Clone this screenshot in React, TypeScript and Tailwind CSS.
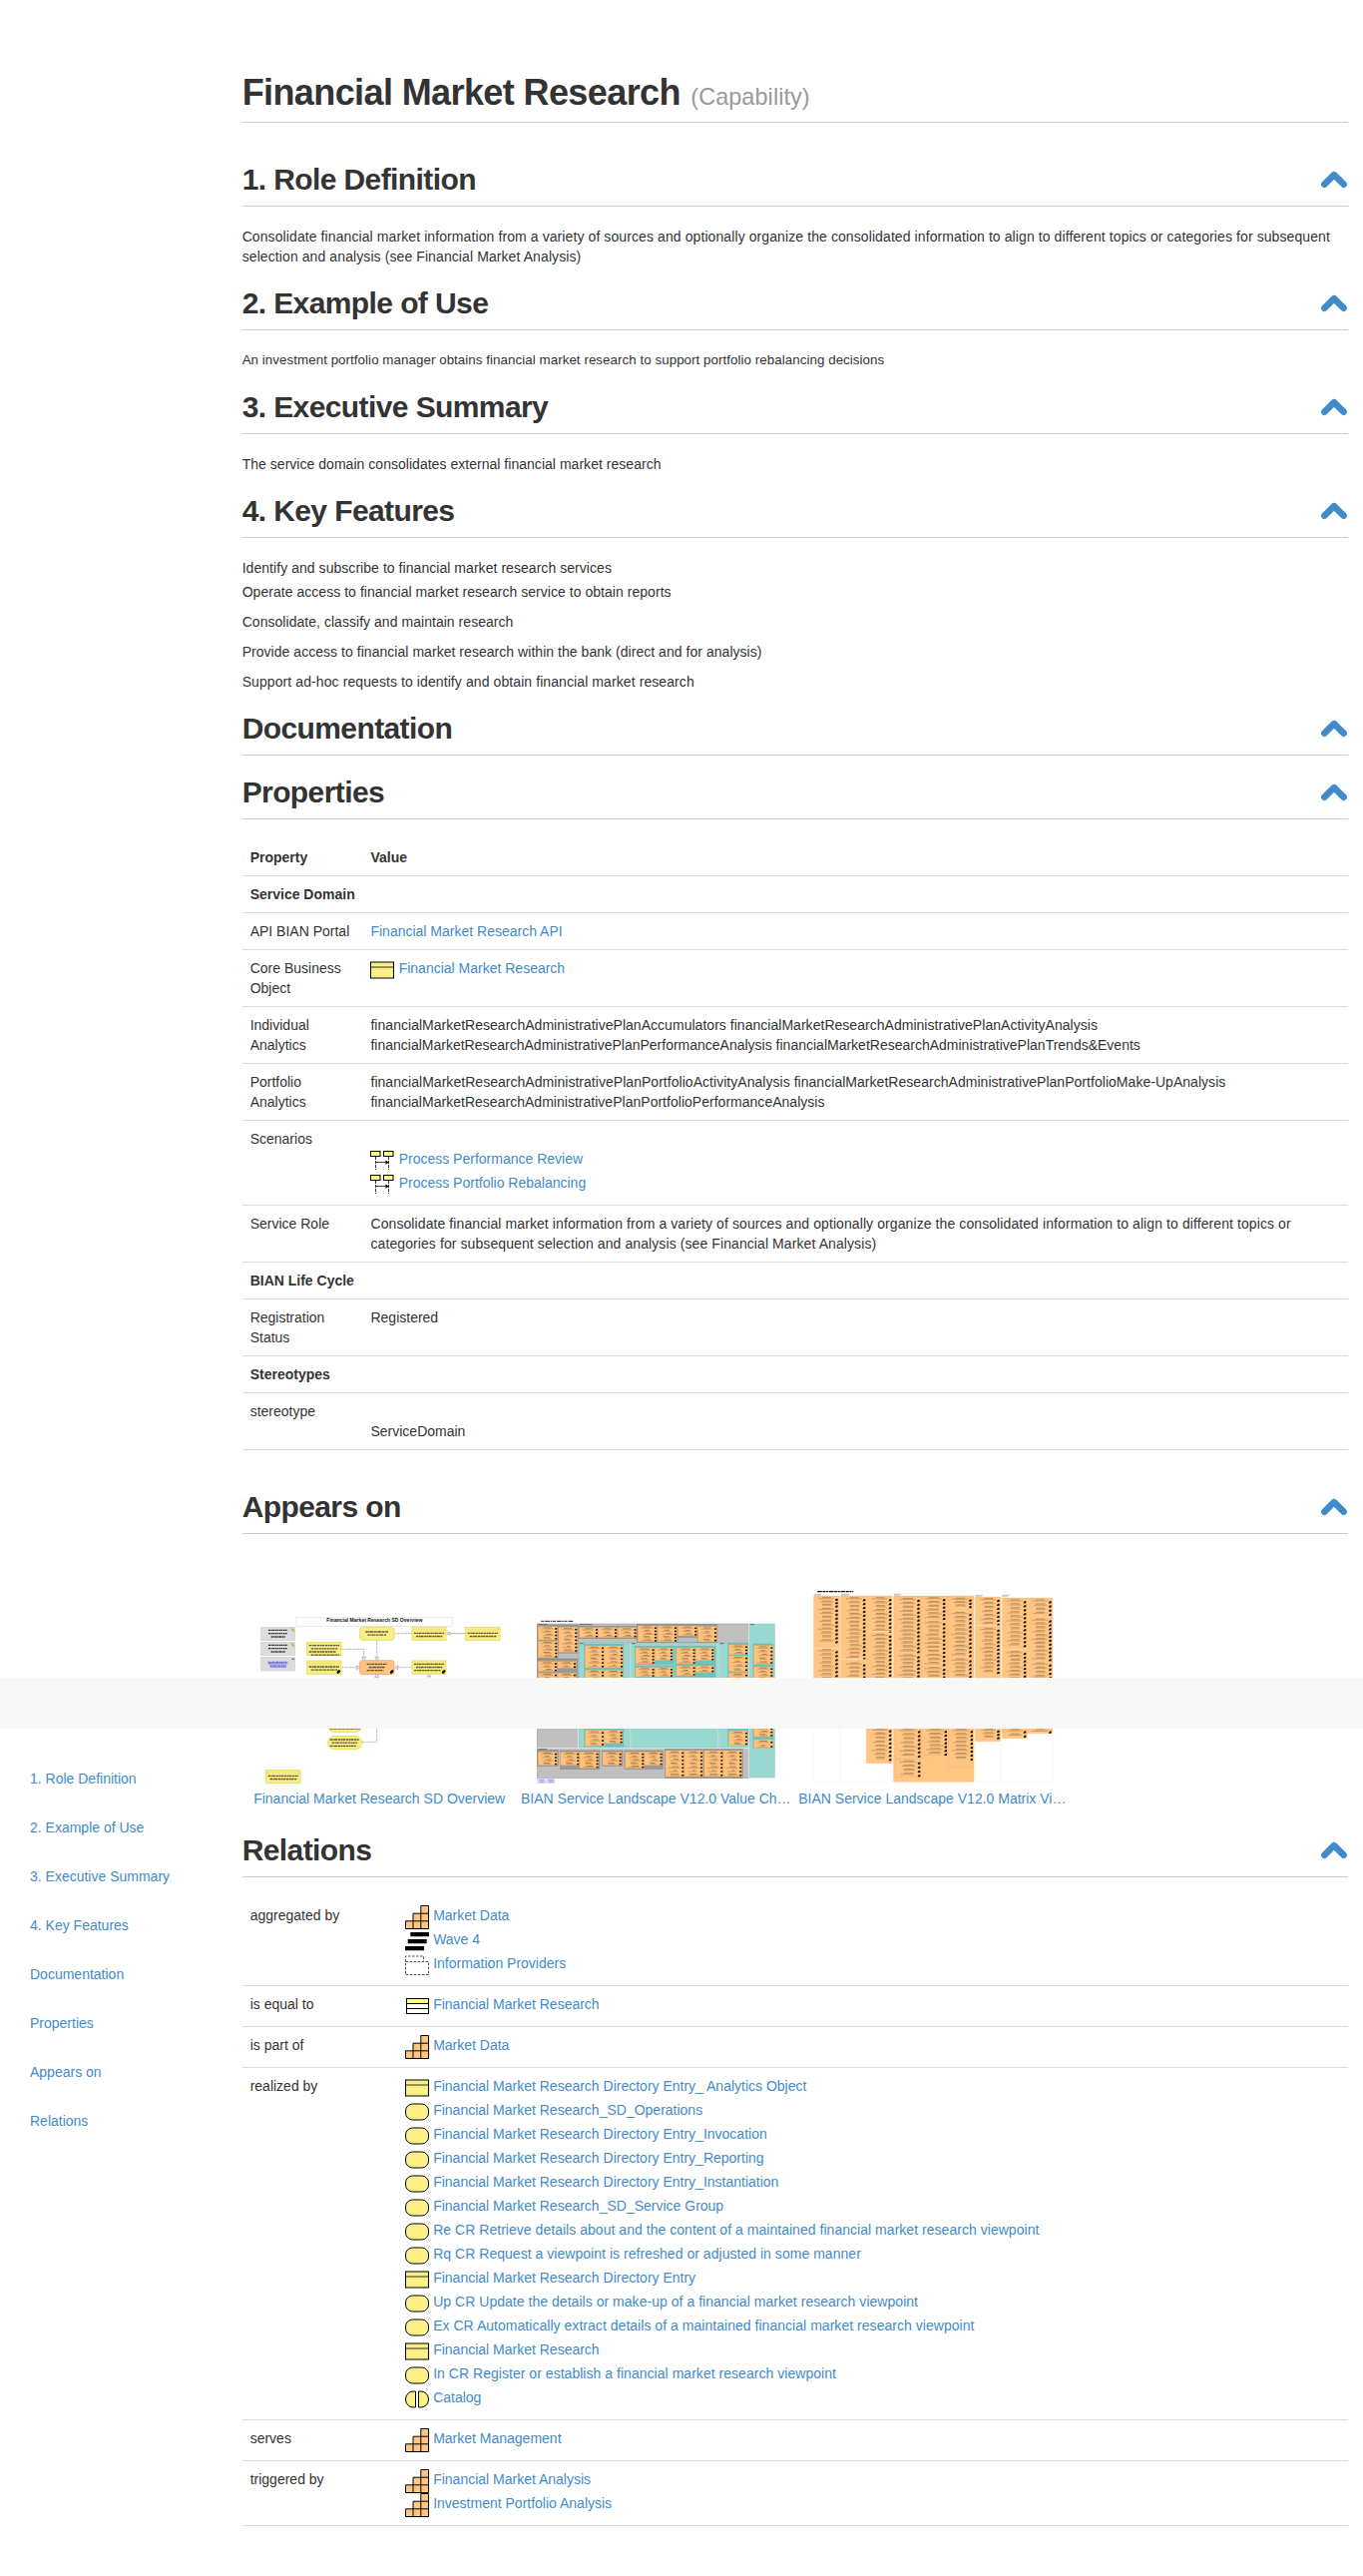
import React from "react";

type IconKind = "object" | "service" | "capability" | "plateau" | "group" | "entity" | "process" | "catalog";
type LinkItem = [IconKind, string];

const YELLOW = "#fbef87";
const ORANGE = "#ffc582";

function Icon({ kind }: { kind: IconKind }) {
  return (
    <svg width="24" height="24" viewBox="0 0 24 24" fill="none" stroke="#000" className="block shrink-0">
      {kind === "object" && (
        <>
          <rect x="0.5" y="4" width="23" height="16" fill={YELLOW} />
          <path d="M1 9H23" stroke="#7d7744" strokeWidth="1.6" />
        </>
      )}
      {kind === "service" && <rect x="0.5" y="4" width="23" height="16" rx="7" fill={YELLOW} />}
      {kind === "capability" && (
        <>
          <path d="M0.5 23.5V15.8H8V8.2H15.8V0.5H23.5V23.5Z" fill={ORANGE} />
          <path d="M8 15.8V23.5M15.8 8.2V23.5M8 15.8H23.5M15.8 8.2H23.5" />
        </>
      )}
      {kind === "plateau" && (
        <path d="M5.3 3H24V7.2H5.3ZM2.7 10H21.7V14.2H2.7ZM0 17H19V21.2H0Z" fill="#000" stroke="none" />
      )}
      {kind === "group" && (
        <path d="M0.5 8.5V3H18.5V8.5M0.5 8.5H23.5V21.5H0.5Z" stroke="#555" strokeDasharray="2.6 1.4" />
      )}
      {kind === "entity" && (
        <>
          <rect x="1.5" y="4.5" width="22" height="15" fill="#fff" />
          <rect x="1.5" y="4.5" width="22" height="5" fill="#ffff80" />
          <path d="M1.5 14.5H23.5" />
        </>
      )}
      {kind === "process" && (
        <>
          <rect x="0.5" y="2.5" width="9.5" height="5" fill="#ffff80" />
          <rect x="13.5" y="2.5" width="9.5" height="5" fill="#ffff80" />
          <path d="M5.5 8V21M18.5 8V21" strokeDasharray="3 1" stroke="#333" />
          <path d="M5.5 13.5H17" stroke="#444" />
          <path d="M15.5 11.5L19 13.6L15.5 15.7Z" fill="#000" stroke="none" />
        </>
      )}
      {kind === "catalog" && (
        <>
          <path d="M10.5 4V20H8A7.5 8 0 0 1 8 4Z" fill={YELLOW} />
          <path d="M13.5 4V20H16A7.5 8 0 0 0 16 4Z" fill={YELLOW} />
        </>
      )}
    </svg>
  );
}

function Links({ items }: { items: LinkItem[] }) {
  return (
    <ul>
      {items.map(([kind, label]) => (
        <li key={label} className="flex h-6 items-start gap-[4.2px]">
          <Icon kind={kind} />
          <a className={label.includes(" CR ") || label.startsWith("Up CR") ? "tracking-[0.035px] text-[#428bca]" : "text-[#428bca]"}>{label}</a>
        </li>
      ))}
    </ul>
  );
}

function Heading({ children }: { children: React.ReactNode }) {
  return (
    <div className="my-5 flex h-11 items-start justify-between border-b border-[#ccc]">
      <h2 className="text-[30px] leading-[33px] font-bold tracking-[-0.6px]">{children}</h2>
      <svg width="28" height="20" viewBox="0 0 28 20" className="mt-[7px] block">
        <path d="M4.4 14.7L14 5.2L23.6 14.7" fill="none" stroke="#428bca" strokeWidth="6.6" strokeLinecap="round" strokeLinejoin="round" />
      </svg>
    </div>
  );
}

function PropertyRow({ name, children }: { name: string; children: React.ReactNode }) {
  return (
    <div className="flex border-b border-[#ddd] py-2">
      <div className="w-[120.8px] shrink-0 pr-2 pl-2">{name}</div>
      <div className="grow pr-2 pl-2">{children}</div>
    </div>
  );
}

function GroupRow({ name }: { name: string }) {
  return <div className="border-b border-[#ddd] p-2 font-bold">{name}</div>;
}

function RelationRow({ name, items }: { name: string; items: LinkItem[] }) {
  return (
    <div className="flex border-b border-[#ddd] py-2">
      <div className="w-[155.3px] shrink-0 pl-2">{name}</div>
      <div className="grow pl-2">
        <Links items={items} />
      </div>
    </div>
  );
}

type Box = [number, number, number, number];

function Caption({ x, y, w, rows }: { x: number; y: number; w: number; rows: number }) {
  return (
    <>
      {Array.from({ length: rows }, (_, i) => (
        <path
          key={i}
          d={`M${x + 6 + (i % 2) * 6} ${y + i * 9.5}H${x + w - 6 - (i % 3) * 5}`}
          stroke="#222"
          strokeOpacity="0.75"
          strokeWidth="4"
          strokeDasharray="7 1.5 4 1 9 2"
        />
      ))}
    </>
  );
}

function OverviewDiagram() {
  const cards: [...Box, number][] = [
    [518, 151, 102, 39, 2],
    [679, 151, 103, 39, 2],
    [202, 196, 103, 40, 4],
    [202, 252, 103, 40, 2],
    [518, 252, 102, 40, 3],
    [79, 580, 103, 40, 2],
  ];
  return (
    <svg viewBox="8 -69 831.25 705" className="block h-[235px] w-full">
      <rect x="170" y="121" width="470" height="27" fill="#fff" stroke="#e3e3e3" strokeWidth="2" />
      <text x="405" y="135" textAnchor="middle" textLength="288" lengthAdjust="spacingAndGlyphs" fontSize="13.5" fontWeight="bold" fill="#111">
        Financial Market Research SD Overview
      </text>
      {[151, 196, 242].map((y, i) => (
        <g key={y}>
          <rect x="64" y={y} width="102" height="40" fill="#dcdcdc" stroke="#cfcfcf" strokeWidth="2" />
          {i < 2 ? (
            <>
              <path d={`M86 ${y + 9}H144M86 ${y + 19}H142M94 ${y + 29}H136`} stroke="#333" strokeWidth="4" strokeDasharray="6 1.5 4 1" />
              <path d={`M154 ${y + 5}h5v6h5`} stroke="#b5a800" strokeWidth="3" fill="none" />
            </>
          ) : (
            <>
              <path d={`M85 ${y + 15}H144M91 ${y + 25}H140`} stroke="#6c62ef" strokeWidth="5" strokeDasharray="6 1.5 4 1" />
              <path d={`M85 ${y + 19}H144M91 ${y + 29}H140`} stroke="#3b2ff5" strokeWidth="1.5" />
              <path d={`M156 ${y + 5}h8`} stroke="#777" strokeWidth="4" />
            </>
          )}
        </g>
      ))}
      <g fill="none" stroke="#888" strokeWidth="1.8">
        <path d="M465 170H518" strokeDasharray="6 2" />
        <path d="M632 170H679" />
        <path d="M412 190V240M305 217H373V240M305 272H352M476 272H518M412 302V496H368" strokeDasharray="6 2" />
        <g fill="#fff">
          <path d="M622 170L632 165V175ZM412 250L406 241H418ZM373 250L367 241H379ZM361 272L352 266V278ZM466 272L475 266V278ZM412 292L406 301H418ZM569 292L564 300H574Z" />
        </g>
      </g>
      {cards.map(([x, y, w, h, rows]) => (
        <g key={`${x}-${y}`}>
          <rect x={x} y={y} width={w} height={h} fill="#f9ee83" stroke="#e6da55" strokeWidth="2.5" />
          <path d={`M${x + 2} ${y + 8}H${x + w - 2}`} stroke="#ddd268" strokeWidth="1.5" />
          <Caption x={x} y={y + (rows > 2 ? 10 : 18)} w={w} rows={rows} />
        </g>
      ))}
      <rect x="361" y="151" width="103" height="39" rx="7" fill="#f9ee83" stroke="#e6da55" strokeWidth="2.5" />
      <Caption x={372} y={165} w={80} rows={2} />
      <rect x="361" y="251" width="103" height="42" rx="7" fill="#ffc384" stroke="#eda866" strokeWidth="2.5" />
      <Caption x={376} y={262} w={72} rows={3} />
      <g stroke="#000" strokeWidth="7" strokeLinecap="round">
        <path d="M295 287L299 283M455 287L459 283M611 287L615 283" />
      </g>
      <rect x="265" y="428" width="102" height="38" rx="19" fill="#f9ee83" stroke="#e6da55" strokeWidth="2.5" />
      <Caption x={265} y={456} w={102} rows={1} />
      <rect x="265" y="478" width="102" height="40" rx="20" fill="#f9ee83" stroke="#e6da55" strokeWidth="2.5" />
      <Caption x={265} y={489} w={100} rows={3} />
    </svg>
  );
}

function Stack({ x, y, w, h, pitch = 10.6 }: { x: number; y: number; w: number; h: number; pitch?: number }) {
  const rows = Math.max(2, Math.round(h / pitch));
  const step = h / rows;
  return (
    <>
      <rect x={x} y={y} width={w} height={h} fill="#ffc17c" stroke="#e6a45c" strokeWidth="1" />
      {Array.from({ length: rows }, (_, i) => (
        <g key={i}>
          <path d={`M${x + 16 + (i % 3) * 4} ${y + step * (i + 0.35)}H${x + w - 17 - (i % 2) * 5}`} stroke="#7b5a36" strokeWidth="1.8" />
          <path d={`M${x + 9 + ((i * 5) % 4) * 3} ${y + step * (i + 0.68)}H${x + w - 12 - (i % 2) * 5}`} stroke="#997247" strokeWidth="1.4" />
          <rect x={x + w - 7} y={y + step * (i + 0.45)} width="6" height="4.5" fill="#111" />
        </g>
      ))}
    </>
  );
}

function ValueChainDiagram() {
  const greyFrames: Box[] = [
    [55, 144, 122, 104], [55, 248, 122, 60], [180, 148, 176, 37], [354, 142, 242, 55],
    [55, 520, 62, 48], [123, 522, 119, 56], [249, 522, 62, 46], [317, 522, 115, 55], [438, 518, 234, 86],
  ];
  const tealFrames: Box[] = [
    [196, 202, 118, 106], [348, 208, 117, 54], [470, 208, 120, 58], [348, 267, 117, 36], [470, 264, 120, 36],
    [628, 199, 61, 110], [704, 201, 60, 108], [196, 458, 118, 52], [628, 458, 61, 48], [704, 440, 60, 75],
  ];
  const stacks: Box[] = [
    [57, 149, 58, 40], [57, 193, 58, 50], [119, 151, 56, 75], [57, 254, 57, 30], [116, 254, 55, 20], [57, 289, 57, 20], [116, 289, 55, 20],
    [181, 152, 56, 30], [238, 152, 56, 30], [297, 152, 56, 30], [357, 147, 57, 48], [417, 147, 57, 48], [478, 147, 57, 30], [538, 149, 56, 46],
    [198, 207, 57, 66], [256, 207, 56, 66], [198, 280, 57, 30], [256, 280, 56, 30],
    [350, 213, 57, 48], [408, 213, 54, 38], [473, 213, 57, 48], [531, 213, 55, 38],
    [350, 272, 57, 28], [408, 272, 54, 28], [473, 267, 57, 30], [531, 267, 55, 20],
    [630, 204, 57, 29], [630, 237, 57, 47], [630, 289, 57, 22], [706, 206, 57, 56], [706, 270, 57, 40],
    [198, 461, 57, 47], [256, 461, 55, 39], [630, 463, 57, 43], [706, 440, 57, 40], [706, 489, 57, 26],
    [57, 526, 57, 40], [124, 526, 57, 40], [182, 526, 57, 49], [251, 526, 57, 40], [319, 526, 57, 49], [377, 526, 54, 40],
    [440, 522, 56, 78], [497, 522, 55, 78], [557, 522, 56, 78], [614, 522, 56, 78],
  ];
  return (
    <svg viewBox="-0.75 -69 831.25 705" className="block h-[235px] w-full">
      <path d="M66 133H162" stroke="#222" strokeWidth="3" strokeDasharray="9 3 14 2 5 2" />
      <rect x="54" y="141" width="637" height="464" fill="#bfbfbf" stroke="#999" strokeWidth="1.5" />
      <g fill="#98d8d0" stroke="#7bc5bd" strokeWidth="1.5">
        <rect x="180" y="198" width="154" height="315" />
        <rect x="336" y="198" width="262" height="315" />
        <rect x="601" y="198" width="88" height="315" />
        <rect x="693" y="141" width="75" height="462" />
      </g>
      <path d="M178 198V513M335 198V513M599 198V513M54 515H690M691 141V605" stroke="#e2eeee" strokeWidth="2.5" />
      <path d="M58 143H84M182 143H220M182 200H194M338 200H350M603 200H616M695 143H707M58 518H84" stroke="#444" strokeWidth="2" />
      {greyFrames.map(([x, y, w, h]) => (
        <rect key={`${x}-${y}`} x={x} y={y} width={w} height={h} fill="#999" stroke="#777" strokeWidth="1" />
      ))}
      <path d="M118 230H176V245H118ZM478 183H535V196H478Z" fill="#bfbfbf" />
      {tealFrames.map(([x, y, w, h]) => (
        <rect key={`${x}-${y}`} x={x} y={y} width={w} height={h} fill="#6bc5bd" stroke="#58aca5" strokeWidth="1" />
      ))}
      {stacks.map(([x, y, w, h]) => (
        <Stack key={`${x}-${y}`} x={x} y={y} w={w} h={h} />
      ))}
      <path d="M54 606H80V621H54ZM81 606H108V621H81Z" fill="#d9d7fa" />
      <path d="M60 611H75M62 616H74M87 611H104M89 616H102" stroke="#8885a8" strokeWidth="2" />
    </svg>
  );
}

function MatrixDiagram() {
  const panels: Box[] = [
    [76, 57, 78, 280], [157, 57, 155, 280], [234, 300, 78, 260], [316, 57, 242, 559],
    [562, 60, 76, 434], [642, 63, 152, 407], [642, 460, 76, 25],
  ];
  const columns: Box[] = [
    [82, 60, 66, 30], [82, 92, 66, 106], [82, 216, 66, 96], [165, 60, 66, 188], [165, 256, 66, 60], [243, 60, 66, 106], [243, 170, 66, 140],
    [324, 62, 70, 166], [324, 232, 70, 80], [401, 60, 70, 68], [401, 132, 70, 135], [401, 270, 70, 45],
    [482, 62, 68, 30], [482, 104, 68, 136], [482, 244, 68, 70], [570, 62, 64, 84], [570, 152, 64, 138],
    [648, 66, 66, 144], [648, 222, 66, 90], [724, 66, 66, 50], [724, 124, 66, 128], [724, 256, 66, 50],
    [243, 454, 66, 98], [326, 456, 70, 86], [326, 550, 70, 50], [406, 456, 70, 80], [484, 456, 70, 95],
    [570, 456, 64, 30], [648, 456, 66, 26], [724, 456, 66, 14],
  ];
  return (
    <svg viewBox="20.5 -69 831.25 705" className="block h-[235px] w-full">
      <path d="M87 44H195" stroke="#111" strokeWidth="3.5" strokeDasharray="14 2 9 2 6 2" />
      <g stroke="#777" strokeWidth="1.3">
        <path d="M77 52H99M77 55H98M158 52H183M158 55H182M317 52H340M317 55H336M562 55H586M562 58H580M642 55H666M642 58H660" />
      </g>
      <path d="M77 57V616H155V57M158 57V616H312V57M562 60V616H638V60M641 54V616H794V54M317 50H497V57" fill="none" stroke="#f0f0f0" strokeWidth="1.5" />
      {panels.map(([x, y, w, h]) => (
        <rect key={`${x}-${y}`} x={x} y={y} width={w} height={h} rx="3" fill="#ffc582" stroke="#fab972" strokeWidth="1" />
      ))}
      <g fill="none" stroke="#f2b675" strokeWidth="1.5">
        <rect x="322" y="60" width="76" height="486" />
        <rect x="399" y="60" width="76" height="476" />
        <rect x="481" y="60" width="73" height="511" />
        <rect x="322" y="548" width="76" height="54" />
      </g>
      {columns.map(([x, y, w, h]) => {
        const rows = Math.max(1, Math.round(h / 12));
        const step = h / rows;
        return Array.from({ length: rows }, (_, i) => (
          <g key={`${x}-${y}-${i}`}>
            <path d={`M${x + 20} ${y + step * (i + 0.2)}H${x + w - 19}`} stroke="#97724c" strokeWidth="2" />
            <path d={`M${x + 8 + ((i * 7) % 5) * 3} ${y + step * (i + 0.5)}H${x + w - 10 - ((i * 5) % 4) * 3}`} stroke="#ab8254" strokeWidth="1.8" />
            <rect x={x + w - 5} y={y + step * (i + 0.55)} width="5.5" height="6" fill="#111" />
            <rect x={x + w - 7} y={y + step * (i + 0.75)} width="4" height="4" fill="#111" />
          </g>
        ));
      })}
      <path d="M76 214H154M157 247H232M235 164H312M562 146H638M642 218H718" stroke="#ffe9cf" strokeWidth="2" />
    </svg>
  );
}

function Thumbnail({ label, children }: { label: string; children: React.ReactNode }) {
  return (
    <div className="w-1/4">
      {children}
      <a className="block pr-0.5 text-center whitespace-nowrap text-[#428bca]">{label}</a>
    </div>
  );
}

const sections = [
  "1. Role Definition",
  "2. Example of Use",
  "3. Executive Summary",
  "4. Key Features",
  "Documentation",
  "Properties",
  "Appears on",
  "Relations",
];

const role =
  "Consolidate financial market information from a variety of sources and optionally organize the consolidated information to align to different topics or categories for subsequent selection and analysis (see Financial Market Analysis)";

const relations: { name: string; items: LinkItem[] }[] = [
  { name: "aggregated by", items: [["capability", "Market Data"], ["plateau", "Wave 4"], ["group", "Information Providers"]] },
  { name: "is equal to", items: [["entity", "Financial Market Research"]] },
  { name: "is part of", items: [["capability", "Market Data"]] },
  {
    name: "realized by",
    items: [
      ["object", "Financial Market Research Directory Entry_ Analytics Object"],
      ["service", "Financial Market Research_SD_Operations"],
      ["service", "Financial Market Research Directory Entry_Invocation"],
      ["service", "Financial Market Research Directory Entry_Reporting"],
      ["service", "Financial Market Research Directory Entry_Instantiation"],
      ["service", "Financial Market Research_SD_Service Group"],
      ["service", "Re CR Retrieve details about and the content of a maintained financial market research viewpoint"],
      ["service", "Rq CR Request a viewpoint is refreshed or adjusted in some manner"],
      ["object", "Financial Market Research Directory Entry"],
      ["service", "Up CR Update the details or make-up of a financial market research viewpoint"],
      ["service", "Ex CR Automatically extract details of a maintained financial market research viewpoint"],
      ["object", "Financial Market Research"],
      ["service", "In CR Register or establish a financial market research viewpoint"],
      ["catalog", "Catalog"],
    ],
  },
  { name: "serves", items: [["capability", "Market Management"]] },
  { name: "triggered by", items: [["capability", "Financial Market Analysis"], ["capability", "Investment Portfolio Analysis"]] },
];

export default function App() {
  return (
    <div className="relative flex h-[2581px] w-[1366px] bg-white font-['Liberation_Sans',Arial,sans-serif] text-[14px] leading-5 text-[#333]">
      <nav className="w-[227.67px] shrink-0 pt-[1757px] pl-[30px]">
        {sections.map((s) => (
          <a key={s} className="flex h-[49px] items-center text-[#428bca]">{s}</a>
        ))}
      </nav>

      <main className="w-[1138.33px] px-[15px] pt-[73px]">
        <h1 className="mb-10 h-[50px] border-b border-[#ccc] text-[36px] leading-[39.6px] font-bold tracking-[-0.6px]">
          Financial Market Research{" "}
          <small className="ml-px text-[23.4px] leading-none font-normal tracking-[0.1px] text-[#999]">(Capability)</small>
        </h1>

        <Heading>1. Role Definition</Heading>
        <p className="tracking-[0.094px]">{role}</p>
        <Heading>2. Example of Use</Heading>
        <p className="text-[13.33px] tracking-[0.06px]">An investment portfolio manager obtains financial market research to support portfolio rebalancing decisions</p>
        <Heading>3. Executive Summary</Heading>
        <p className="tracking-[0.03px]">The service domain consolidates external financial market research</p>
        <Heading>4. Key Features</Heading>
        <p className="mb-1 tracking-[0.05px]">Identify and subscribe to financial market research services</p>
        <div className="flex flex-col gap-2.5 tracking-[0.04px]">
          <p>Operate access to financial market research service to obtain reports</p>
          <p>Consolidate, classify and maintain research</p>
          <p>Provide access to financial market research within the bank (direct and for analysis)</p>
          <p className="tracking-[0.09px]">Support ad-hoc requests to identify and obtain financial market research</p>
        </div>
        <Heading>Documentation</Heading>
        <Heading>Properties</Heading>

        <div className="mb-10">
          <div className="flex border-b border-[#ddd] py-2 font-bold">
            <div className="w-[120.8px] pl-2">Property</div>
            <div className="pl-2">Value</div>
          </div>
          <GroupRow name="Service Domain" />
          <PropertyRow name="API BIAN Portal">
            <a className="text-[#428bca]">Financial Market Research API</a>
          </PropertyRow>
          <PropertyRow name="Core Business Object">
            <Links items={[["object", "Financial Market Research"]]} />
          </PropertyRow>
          <PropertyRow name="Individual Analytics">
            <p className="tracking-[0.03px]">financialMarketResearchAdministrativePlanAccumulators financialMarketResearchAdministrativePlanActivityAnalysis</p>
            <p>financialMarketResearchAdministrativePlanPerformanceAnalysis financialMarketResearchAdministrativePlanTrends&amp;Events</p>
          </PropertyRow>
          <PropertyRow name="Portfolio Analytics">
            <p className="tracking-[0.037px]">financialMarketResearchAdministrativePlanPortfolioActivityAnalysis financialMarketResearchAdministrativePlanPortfolioMake-UpAnalysis</p>
            <p className="tracking-[0.02px]">financialMarketResearchAdministrativePlanPortfolioPerformanceAnalysis</p>
          </PropertyRow>
          <PropertyRow name="Scenarios">
            <div className="pt-5">
              <Links items={[["process", "Process Performance Review"], ["process", "Process Portfolio Rebalancing"]]} />
            </div>
          </PropertyRow>
          <PropertyRow name="Service Role">
            <p className="tracking-[0.09px]">{role}</p>
          </PropertyRow>
          <GroupRow name="BIAN Life Cycle" />
          <PropertyRow name="Registration Status">Registered</PropertyRow>
          <GroupRow name="Stereotypes" />
          <PropertyRow name="stereotype">
            <p className="pt-5">ServiceDomain</p>
          </PropertyRow>
        </div>

        <Heading>Appears on</Heading>
        <div className="mb-[25px] flex">
          <Thumbnail label="Financial Market Research SD Overview">
            <OverviewDiagram />
          </Thumbnail>
          <Thumbnail label="BIAN Service Landscape V12.0 Value Ch…">
            <ValueChainDiagram />
          </Thumbnail>
          <Thumbnail label="BIAN Service Landscape V12.0 Matrix Vi…">
            <MatrixDiagram />
          </Thumbnail>
        </div>

        <Heading>Relations</Heading>
        <div>
          {relations.map((r) => (
            <RelationRow key={r.name} name={r.name} items={r.items} />
          ))}
        </div>
      </main>

      <div className="absolute inset-x-0 top-[1681px] h-[51px] bg-[#f8f8f8]" />
    </div>
  );
}
